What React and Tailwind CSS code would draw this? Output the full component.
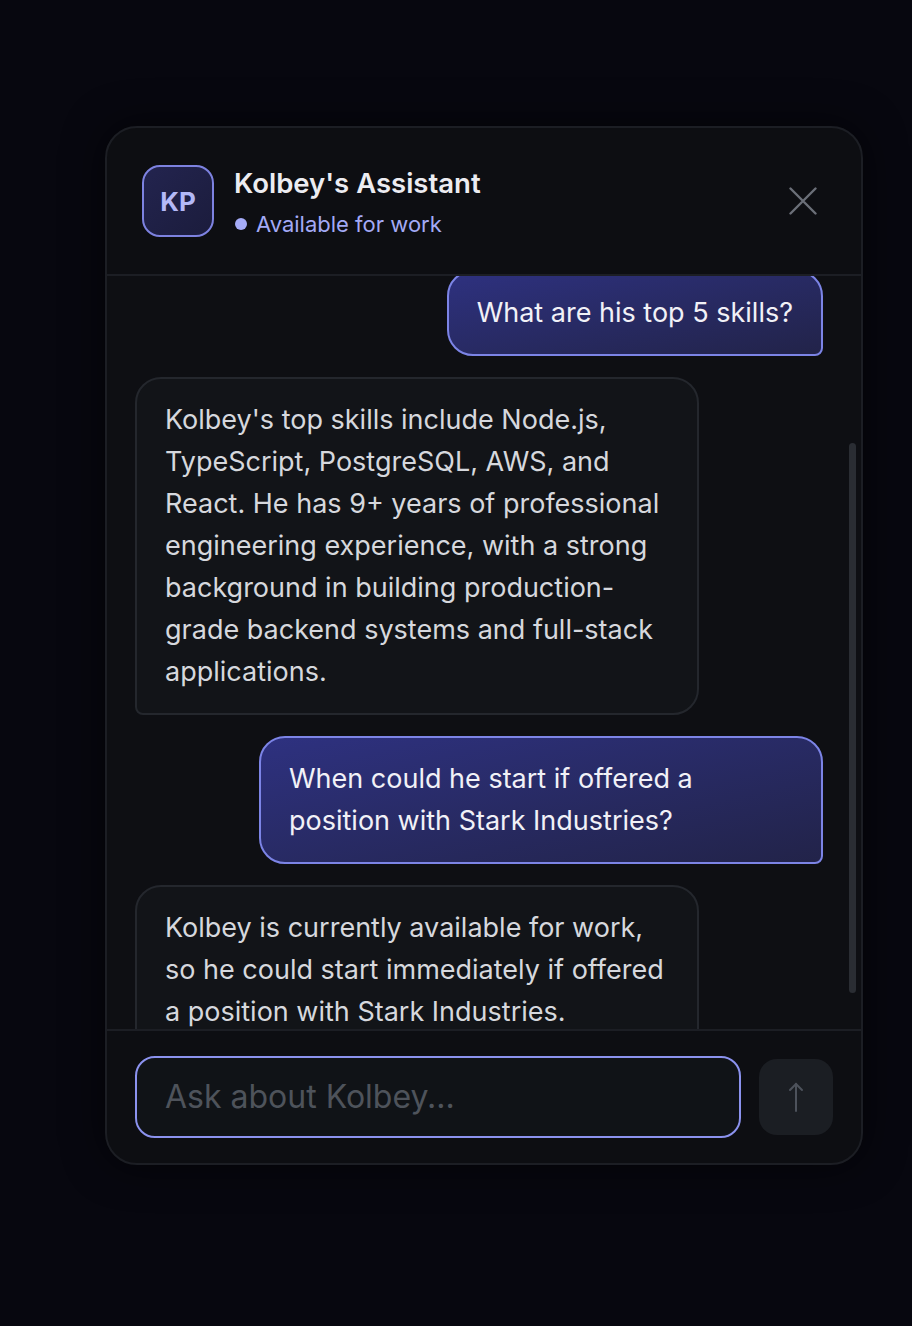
import { useState } from "react";

const messages = [
  { from: "user", text: "What are his top 5 skills?" },
  {
    from: "bot",
    text: "Kolbey's top skills include Node.js, TypeScript, PostgreSQL, AWS, and React. He has 9+ years of professional engineering experience, with a strong background in building production-grade backend systems and full-stack applications.",
  },
  {
    from: "user",
    text: "When could he start if offered a position with Stark Industries?",
  },
  {
    from: "bot",
    text: "Kolbey is currently available for work, so he could start immediately if offered a position with Stark Industries.",
  },
];

export default function App() {
  const [draft, setDraft] = useState("");

  return (
    <div
      className="min-h-screen bg-[#07070f] pt-[126px] pl-[105px]"
      style={{ fontFamily: "Inter, 'Noto Sans', sans-serif" }}
    >
      <div className="w-[758px] h-[1039px] flex flex-col rounded-[32px] border-2 border-[#1c1e24] bg-[#0d0e12] overflow-hidden shadow-[0_0_40px_rgba(0,0,0,0.6)]">
        {/* Header */}
        <div className="h-[148px] shrink-0 flex items-center justify-between pl-[35px] pr-[44px] border-b-2 border-[#1c1e24]">
          <div className="flex items-center gap-[20px]">
            <div className="w-[72px] h-[72px] rounded-[18px] border-2 border-[#7d82e0] bg-gradient-to-br from-[#23244f] to-[#1b1c3c] flex items-center justify-center text-[26px] font-bold text-[#b4b9f7]">
              KP
            </div>
            <div className="flex flex-col gap-[12px] mt-[1px]">
              <div className="text-[27.5px] font-semibold text-[#ececf1] leading-[32px]">
                Kolbey's Assistant
              </div>
              <div className="flex items-center gap-[9px] text-[22px] leading-[26px] text-[#a3aaf6]">
                <span className="w-[12px] h-[12px] rounded-full bg-[#a5acf8] ml-[1px]" />
                Available for work
              </div>
            </div>
          </div>
          <svg width="28" height="28" viewBox="0 0 28 28" fill="none" stroke="#6b6f78" strokeWidth="2.4" strokeLinecap="round">
            <path d="M1.5 1.5l25 25M26.5 1.5l-25 25" />
          </svg>
        </div>

        {/* Messages */}
        <div className="relative flex-1 overflow-hidden bg-[#0e0f13]">
          <div className="flex flex-col gap-[21px] pl-[28px] pr-[38px] -mt-[6px]">
            {messages.map((m, i) =>
              m.from === "user" ? (
                <div key={i} className="flex justify-end">
                  <div className="max-w-[564px] px-[28px] py-[20px] rounded-[26px] rounded-br-[8px] border-2 border-[#7c84e6] bg-gradient-to-br from-[#2e3180] to-[#222349] text-[27px] leading-[42px] text-[#f1f1f7]">
                    {m.text}
                  </div>
                </div>
              ) : (
                <div key={i} className="flex justify-start">
                  <div className="w-[564px] px-[28px] py-[20px] rounded-[26px] rounded-bl-[8px] border-2 border-[#24272d] bg-[#121418] text-[27px] leading-[42px] text-[#d6d8dd]">
                    {m.text}
                  </div>
                </div>
              )
            )}
          </div>
          <div className="absolute right-[5px] top-[167px] w-[7px] h-[550px] rounded-full bg-[#2a2d33]" />
        </div>

        {/* Footer */}
        <div className="h-[134px] shrink-0 border-t-2 border-[#1c1e24] flex items-center gap-[18px] pl-[28px] pr-[28px]">
          <div className="w-[606px] h-[82px] rounded-[20px] border-2 border-[#8b92ee] bg-[#101317] flex items-center px-[28px]">
            <input
              value={draft}
              onChange={(e) => setDraft(e.target.value)}
              placeholder="Ask about Kolbey..."
              className="w-full bg-transparent outline-none text-[32px] text-[#d6d8dd] placeholder:text-[#4e535b]"
            />
          </div>
          <button className="w-[74px] h-[76px] rounded-[18px] bg-[#1b1e23] flex items-center justify-center">
            <svg width="20" height="32" viewBox="0 0 20 32" fill="none" stroke="#4d525b" strokeWidth="2" strokeLinecap="round">
              <path d="M10 30V3" />
              <path d="M4 9l6-6 6 6" />
            </svg>
          </button>
        </div>
      </div>
    </div>
  );
}
